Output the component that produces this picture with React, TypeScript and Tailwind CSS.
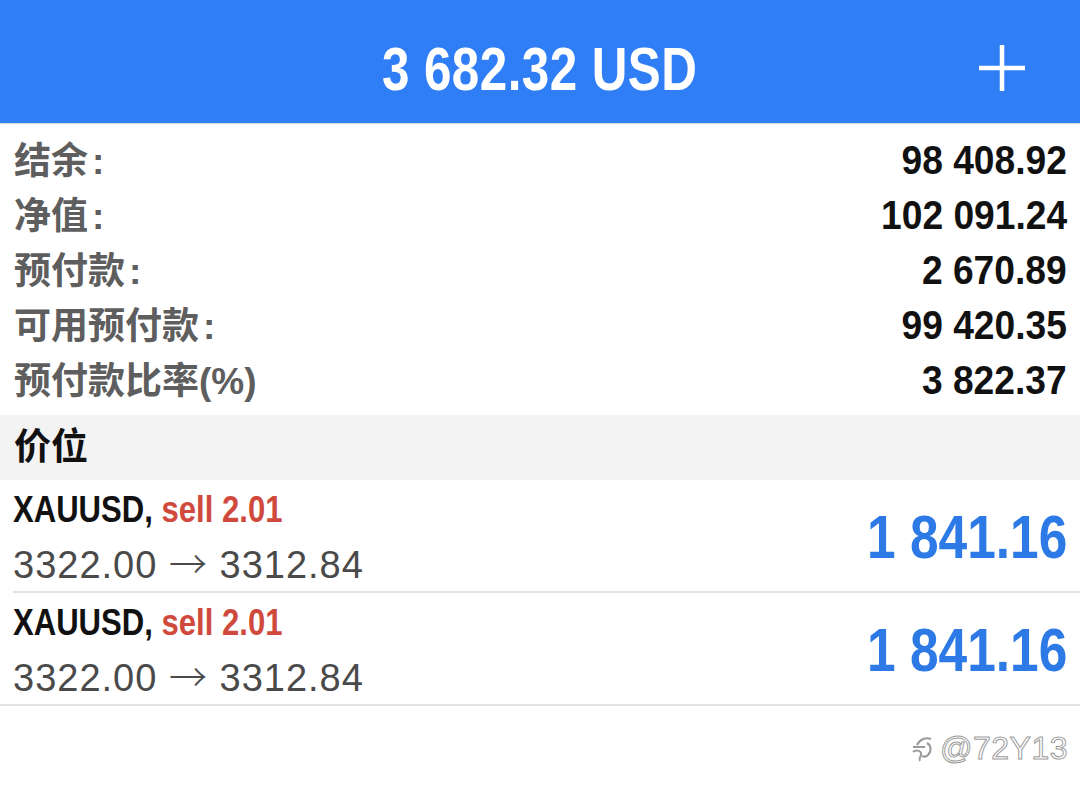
const font = { fontFamily: '"Liberation Sans", "Noto Sans CJK SC", sans-serif' };
const cjk = { fontFamily: '"Noto Sans CJK SC", sans-serif' };

const account = [
  { label: "结余", value: "98 408.92" },
  { label: "净值", value: "102 091.24" },
  { label: "预付款", value: "2 670.89" },
  { label: "可用预付款", value: "99 420.35" },
  { label: "预付款比率(%)", value: "3 822.37", noColon: true },
];

const positions = [
  { symbol: "XAUUSD,", side: "sell 2.01", from: "3322.00", to: "3312.84", profit: "1 841.16", inset: true },
  { symbol: "XAUUSD,", side: "sell 2.01", from: "3322.00", to: "3312.84", profit: "1 841.16", inset: false },
];

export default function App() {
  return (
    <div className="w-[1080px] h-[795px] bg-white overflow-hidden" style={font}>
      {/* 顶部 */}
      <header className="relative h-[123px] bg-[#2f7ef6] flex items-center justify-center pt-[16px] shadow-[0_1px_1px_rgba(0,0,0,0.15)]">
        <span className="inline-block scale-x-[0.81] text-white font-bold text-[61px] leading-none tracking-[0.5px]">
          3 682.32 USD
        </span>
        <svg className="absolute left-[979px] top-[45px]" width="46" height="46" viewBox="0 0 46 46">
          <path d="M23 0v46M0 23h46" stroke="#fff" strokeWidth="4.5" />
        </svg>
      </header>

      {/* 账户信息 */}
      <section className="pt-[9px] pb-[8px]">
        {account.map((row) => (
          <div key={row.label} className="flex items-center justify-between h-[55px] pl-[14px] pr-[13px]">
            <span className="text-[37px] font-bold text-[#5e5e5e] leading-none pt-[3px]">
              {row.label}
              {!row.noColon && <span className="ml-[4px]">:</span>}
            </span>
            <span className="inline-block origin-right scale-x-[0.93] text-[40px] font-bold text-[#111] leading-none">
              {row.value}
            </span>
          </div>
        ))}
      </section>

      <div className="h-[65px] bg-[#f3f3f3] flex items-center pl-[14px]">
        <span className="text-[37px] font-bold text-[#111] leading-none">价位</span>
      </div>

      {/* 持仓 */}
      {positions.map((p, i) => (
        <div key={i} className="relative flex items-center justify-between h-[113px] pr-[13px]">
          <div className="pl-[13px] pt-[4px]">
            <div className="origin-left scale-x-[0.84] h-[40px] leading-[40px] text-[37px] font-bold whitespace-nowrap">
              <span className="text-[#111]">{p.symbol}</span>{" "}
              <span className="text-[#cf4a3d]">{p.side}</span>
            </div>
            <div className="mt-[7px] h-[50px] leading-[50px] text-[38px] tracking-[1px] text-[#4a4a4a] whitespace-nowrap">
              {p.from}{" "}
              <span className="font-light" style={cjk}>→</span>{" "}
              {p.to}
            </div>
          </div>
          <span className="inline-block origin-right scale-x-[0.83] text-[62px] font-bold text-[#2d7ae6] leading-none">
            {p.profit}
          </span>
          <div className={`absolute bottom-0 right-0 h-[2px] bg-[#e2e2e2] ${p.inset ? "left-[13px]" : "left-0"}`} />
        </div>
      ))}

      {/* 水印 */}
      <div className="flex justify-end items-center gap-[6px] pr-[12px] pt-[26px]">
        <svg width="26" height="30" viewBox="0 0 26 30" fill="none" stroke="#9a9a9a" strokeWidth="2">
          <path d="M12 28c-2-3 2-5 1-8-1-3-6-3-8-1M9 12c3-6 9-8 14-6M5 14h12" />
          <path d="M19 10c4 2 5 8 1 12-2 2-4 2-6 1" />
        </svg>
        <span className="text-[32px] leading-none text-white tracking-[0.5px] [-webkit-text-stroke:1px_#9c9c9c]">
          @72Y13
        </span>
      </div>
    </div>
  );
}
